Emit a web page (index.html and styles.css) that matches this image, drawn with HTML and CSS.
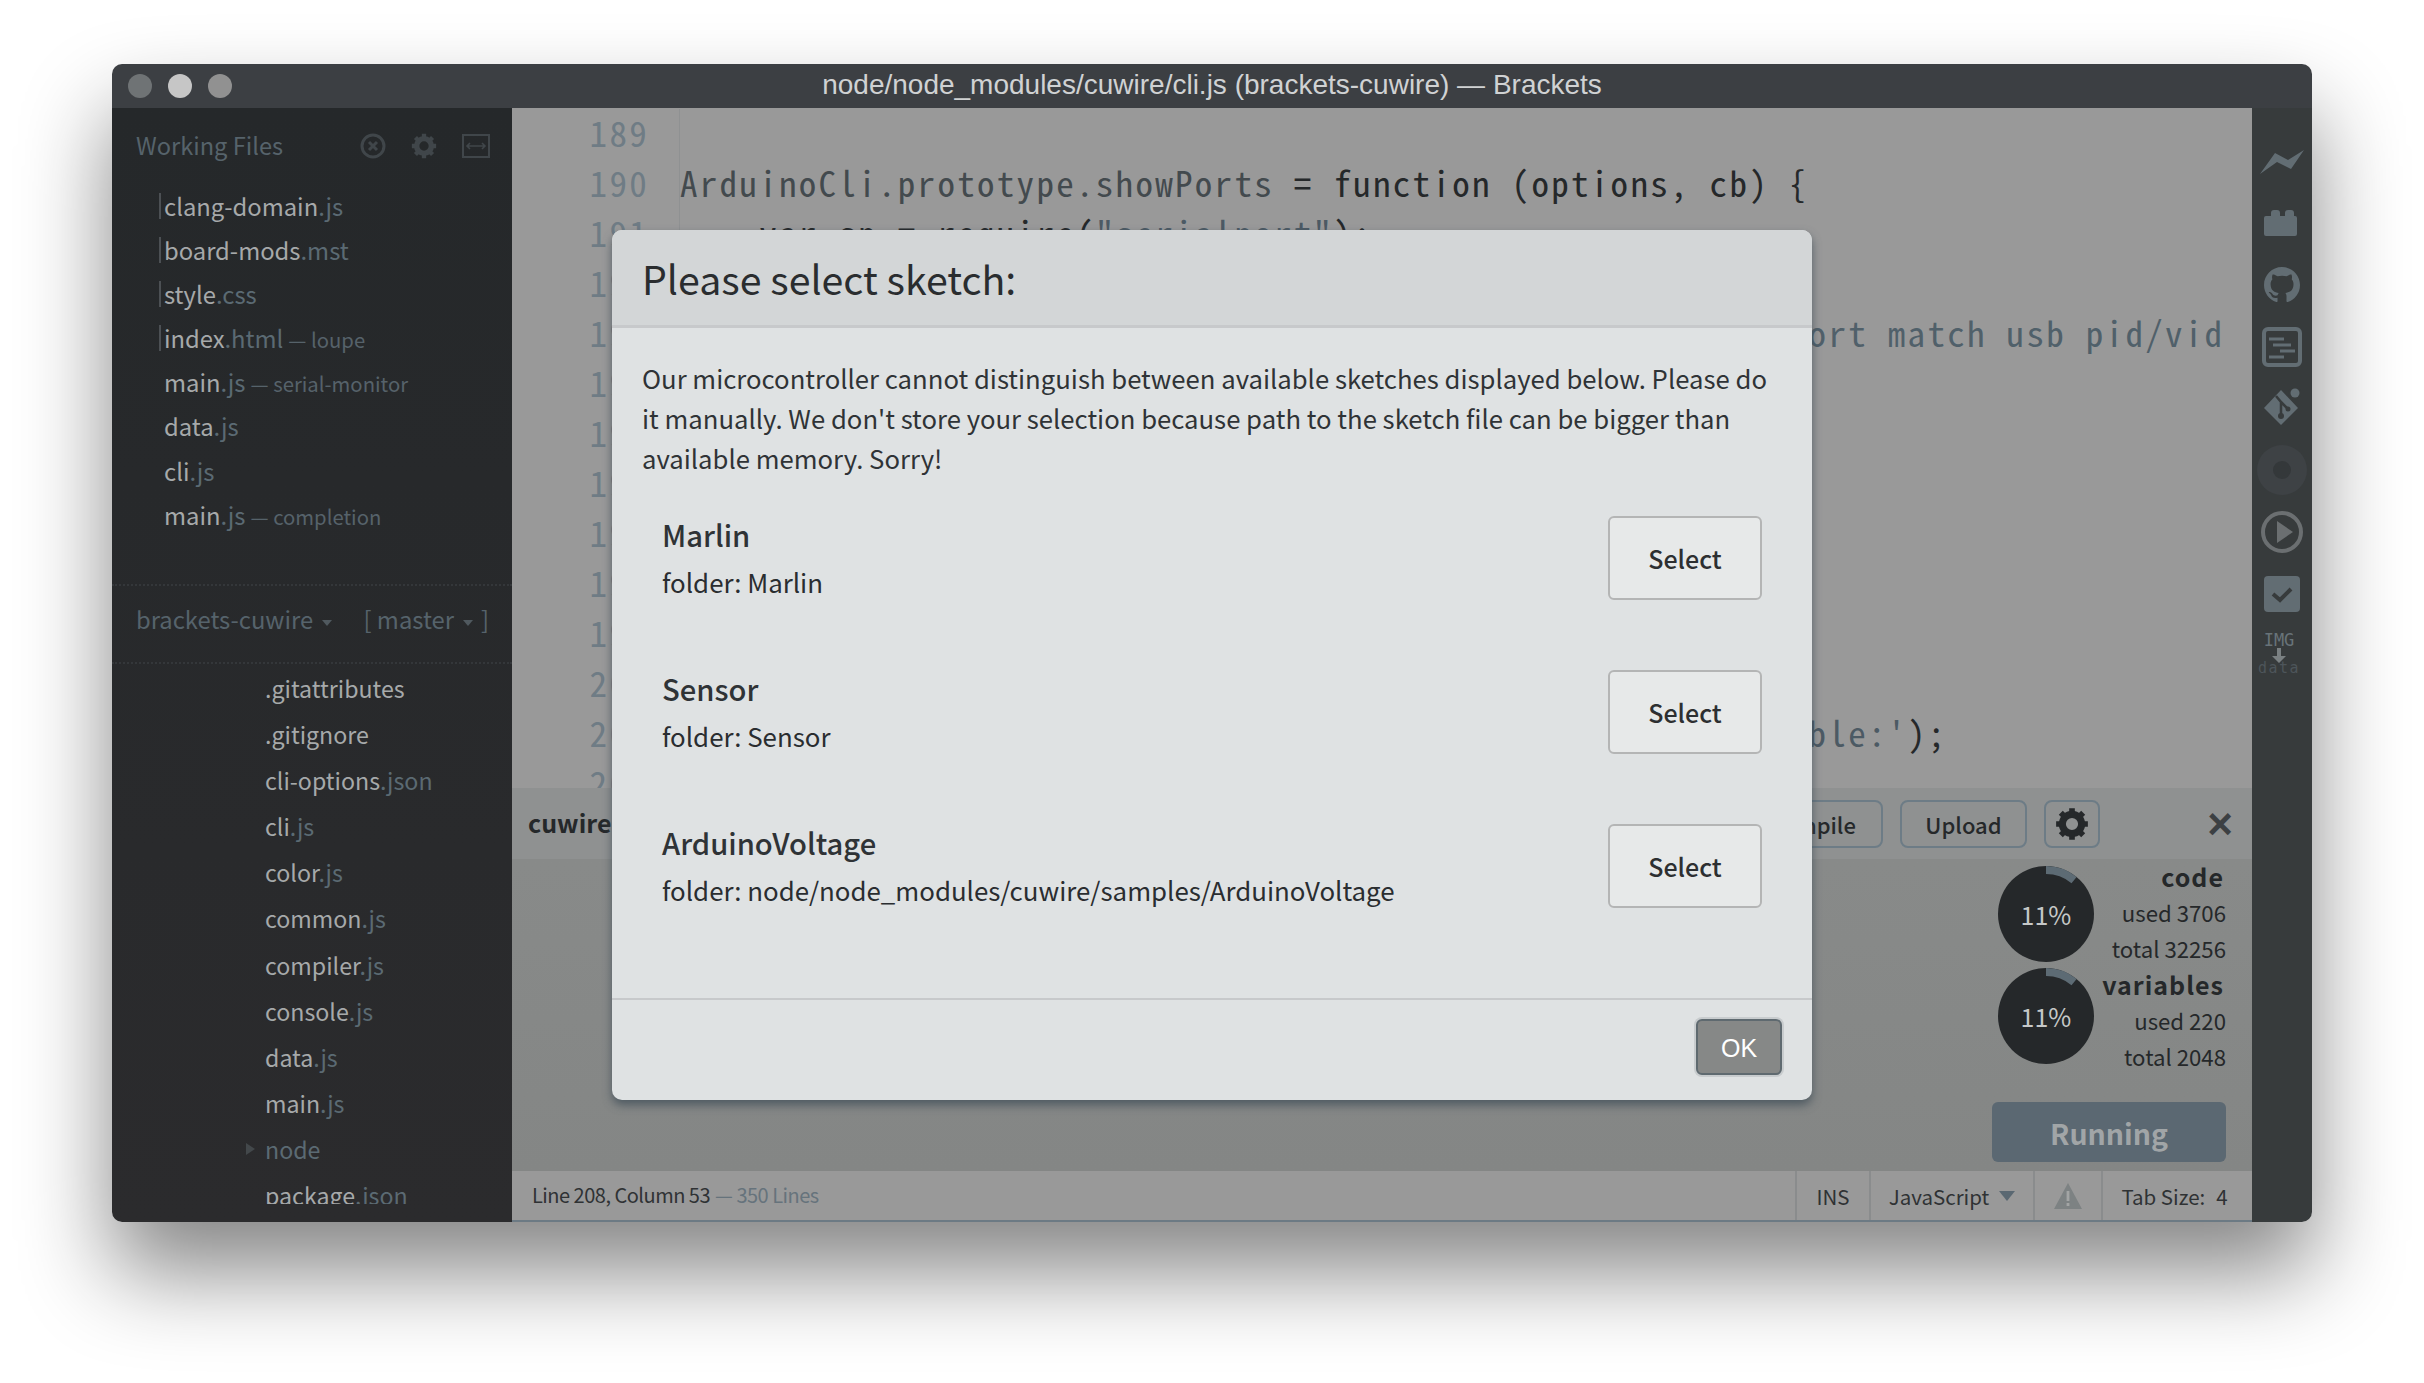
FILE: index.html
```html
<!DOCTYPE html>
<html lang="en">
<head>
<meta charset="utf-8">
<title>Brackets</title>
<link rel="stylesheet" href="styles.css">
</head>
<body>
<svg class="defs" width="0" height="0" aria-hidden="true">
  <symbol id="gear" viewBox="0 0 24 24">
    <circle cx="12" cy="12" r="6.8" fill="none" stroke="currentColor" stroke-width="5"/>
    <path d="M12 .8v5M12 18.2v5M.8 12h5M18.2 12h5M4.1 4.1l3.5 3.5M16.4 16.4l3.5 3.5M4.1 19.9l3.5-3.5M16.4 7.6l3.5-3.5" fill="none" stroke="currentColor" stroke-width="4"/>
  </symbol>
  <symbol id="donut" viewBox="0 0 96 96">
    <circle cx="48" cy="48" r="48" fill="#25282a"/>
    <circle class="donut-arc" cx="48" cy="48" r="44" fill="none" stroke="#5d6b74" stroke-width="8" stroke-dasharray="30.4 246.1" transform="rotate(-90 48 48)"/>
  </symbol>
</svg>
<div class="window">
  <header class="titlebar">
    <div class="lights">
      <span class="light light-a"></span>
      <span class="light light-b"></span>
      <span class="light light-c"></span>
    </div>
    <div class="title">node/node_modules/cuwire/cli.js (brackets-cuwire) — Brackets</div>
  </header>
  <div class="main">
    <aside class="sidebar">
      <div class="working">
        <div class="working-head">
          <span class="working-title">Working Files</span>
          <div class="working-tools">
            <svg class="tool" width="26" height="26" viewBox="0 0 26 26"><circle cx="13" cy="13" r="11" fill="none" stroke="currentColor" stroke-width="3"/><path d="M9 9l8 8M17 9l-8 8" stroke="currentColor" stroke-width="3"/></svg>
            <svg class="tool" width="26" height="26"><use href="#gear"/></svg>
            <svg class="tool" width="28" height="24" viewBox="0 0 28 24"><rect x="1" y="1" width="26" height="22" fill="none" stroke="currentColor" stroke-width="2"/><path d="M5 12h18M8 9l-3 3 3 3M20 9l3 3-3 3" fill="none" stroke="currentColor" stroke-width="1.6"/></svg>
          </div>
        </div>
        <ul class="open-files">
          <li class="open-file marked">clang-domain<span class="ext">.js</span></li>
          <li class="open-file marked">board-mods<span class="ext">.mst</span></li>
          <li class="open-file marked">style<span class="ext">.css</span></li>
          <li class="open-file marked">index<span class="ext">.html</span><span class="note">— loupe</span></li>
          <li class="open-file">main<span class="ext">.js</span><span class="note">— serial-monitor</span></li>
          <li class="open-file">data<span class="ext">.js</span></li>
          <li class="open-file">cli<span class="ext">.js</span></li>
          <li class="open-file">main<span class="ext">.js</span><span class="note">— completion</span></li>
        </ul>
      </div>
      <div class="project-head">
        <span class="project-name">brackets-cuwire<span class="caret"></span></span>
        <span class="project-branch">[ master<span class="caret"></span>]</span>
      </div>
      <ul class="tree">
        <li class="tree-item">.gitattributes</li>
        <li class="tree-item">.gitignore</li>
        <li class="tree-item">cli-options<span class="ext">.json</span></li>
        <li class="tree-item">cli<span class="ext">.js</span></li>
        <li class="tree-item">color<span class="ext">.js</span></li>
        <li class="tree-item">common<span class="ext">.js</span></li>
        <li class="tree-item">compiler<span class="ext">.js</span></li>
        <li class="tree-item">console<span class="ext">.js</span></li>
        <li class="tree-item">data<span class="ext">.js</span></li>
        <li class="tree-item">main<span class="ext">.js</span></li>
        <li class="tree-item folder"><span class="arrow"></span>node</li>
        <li class="tree-item">package<span class="ext">.json</span></li>
      </ul>
    </aside>
    <div class="center">
      <div class="editor">
        <div class="line"><span class="num">189</span><span class="code"></span></div>
        <div class="line"><span class="num">190</span><span class="code"><span class="tk-a">ArduinoCli.prototype.showPorts</span> = function (options, cb) {</span></div>
        <div class="line"><span class="num">191</span><span class="code">    var sp = require(<span class="tk-s">"serialport"</span>);</span></div>
        <div class="line"><span class="num">192</span><span class="code"></span></div>
        <div class="line"><span class="num">193</span><span class="code tk-c">                                                         ort match usb pid/vid</span></div>
        <div class="line"><span class="num">194</span><span class="code"></span></div>
        <div class="line"><span class="num">195</span><span class="code"></span></div>
        <div class="line"><span class="num">196</span><span class="code"></span></div>
        <div class="line"><span class="num">197</span><span class="code"></span></div>
        <div class="line"><span class="num">198</span><span class="code"></span></div>
        <div class="line"><span class="num">199</span><span class="code"></span></div>
        <div class="line"><span class="num">200</span><span class="code"></span></div>
        <div class="line"><span class="num">201</span><span class="code">                                                         <span class="tk-s">ble:'</span>);</span></div>
        <div class="line"><span class="num">202</span><span class="code"></span></div>
      </div>
      <section class="panel">
        <div class="panel-head">
          <span class="panel-name">cuwire</span>
          <div class="panel-actions">
            <button class="pbtn pbtn-compile">Compile</button>
            <button class="pbtn pbtn-upload">Upload</button>
            <button class="pbtn pbtn-gear"><svg width="34" height="34"><use href="#gear"/></svg></button>
            <span class="close">×</span>
          </div>
        </div>
        <div class="panel-body">
          <div class="stats">
            <div class="donuts">
              <div class="donut"><svg width="96" height="96"><use href="#donut"/></svg><span class="donut-label">11%</span></div>
              <div class="donut"><svg width="96" height="96"><use href="#donut"/></svg><span class="donut-label">11%</span></div>
            </div>
            <div class="figures">
              <b class="fig-head">code</b>
              <span>used 3706</span>
              <span>total 32256</span>
              <b class="fig-head">variables</b>
              <span>used 220</span>
              <span>total 2048</span>
            </div>
          </div>
          <button class="running">Running</button>
        </div>
      </section>
      <footer class="status">
        <div class="status-pos">Line 208, Column 53<span class="status-lines">— 350 Lines</span></div>
        <div class="cell cell-ins">INS</div>
        <div class="cell cell-lang">JavaScript<span class="lang-caret"></span></div>
        <div class="cell cell-warn">
          <svg width="30" height="28" viewBox="0 0 30 28"><path d="M15 1L29 27H1Z" fill="#7d8283"/><path d="M13.6 9h2.8v10h-2.8zM13.6 21h2.8v3h-2.8z" fill="#a3a5a5"/></svg>
        </div>
        <div class="cell cell-tab">Tab Size:<span class="tab-num">4</span></div>
      </footer>
    </div>
    <nav class="toolbar">
      <svg class="ic" width="44" height="24" viewBox="0 0 44 24"><path d="M0 24L15 3l13 7L44 0 31 19 17 12Z" fill="currentColor"/></svg>
      <svg class="ic" width="36" height="26" viewBox="0 0 36 26"><path d="M2 6h5V3a3 3 0 013-3h3a3 3 0 013 3v3h5V3a3 3 0 013-3h3a3 3 0 013 3v3h1a2 2 0 012 2v16a2 2 0 01-2 2H2a2 2 0 01-2-2V8a2 2 0 012-2z" fill="currentColor"/></svg>
      <svg class="ic" width="36" height="36" viewBox="0 0 16 16"><path fill="currentColor" d="M8 0C3.58 0 0 3.58 0 8c0 3.54 2.29 6.53 5.47 7.59.4.07.55-.17.55-.38 0-.19-.01-.82-.01-1.49-2.01.37-2.53-.49-2.69-.94-.09-.23-.48-.94-.82-1.13-.28-.15-.68-.52-.01-.53.63-.01 1.08.58 1.23.82.72 1.21 1.87.87 2.33.66.07-.52.28-.87.51-1.07-1.78-.2-3.64-.89-3.64-3.95 0-.87.31-1.59.82-2.15-.08-.2-.36-1.02.08-2.12 0 0 .67-.21 2.2.82.64-.18 1.32-.27 2-.27.68 0 1.36.09 2 .27 1.53-1.04 2.2-.82 2.2-.82.44 1.1.16 1.92.08 2.12.51.56.82 1.27.82 2.15 0 3.07-1.87 3.75-3.65 3.95.29.25.54.73.54 1.48 0 1.07-.01 1.93-.01 2.2 0 .21.15.46.55.38A8.013 8.013 0 0016 8c0-4.42-3.58-8-8-8z"/></svg>
      <svg class="ic" width="40" height="40" viewBox="0 0 40 40"><rect x="2" y="2" width="36" height="36" rx="4" fill="none" stroke="currentColor" stroke-width="4"/><path d="M7 12h15M11 18h18M18 24h15M7 30h15" fill="none" stroke="currentColor" stroke-width="3"/></svg>
      <svg class="ic" width="38" height="38" viewBox="0 0 38 38"><path d="M18 2L1 20l17 17 17-17Z" fill="currentColor"/><circle cx="32" cy="5" r="6.500" fill="#373b3c"/><circle cx="32" cy="5" r="4.500" fill="currentColor"/><path d="M13 8l5 6v14M18 14l7 7" fill="none" stroke="#373b3c" stroke-width="2.500"/><circle cx="18" cy="28" r="3" fill="#373b3c"/><circle cx="25" cy="21" r="2.500" fill="#373b3c"/></svg>
      <svg class="ic ic-disc" width="54" height="50" viewBox="0 0 54 50"><circle cx="27" cy="25" r="25" fill="#3e4245"/><circle cx="27" cy="25" r="9" fill="#34383a"/></svg>
      <svg class="ic ic-play" width="42" height="42" viewBox="0 0 42 42"><circle cx="21" cy="21" r="19" fill="none" stroke="currentColor" stroke-width="4"/><path d="M16 10l16 11-16 11Z" fill="currentColor"/></svg>
      <svg class="ic" width="36" height="36" viewBox="0 0 36 36"><rect width="36" height="36" rx="4" fill="currentColor"/><path d="M9 18l7 6 11-11" fill="none" stroke="#373b3c" stroke-width="4"/></svg>
      <div class="imgdata"><span class="img-a">IMG</span><svg class="img-arrow" width="14" height="15" viewBox="0 0 14 15"><path d="M5 0h4v8h5l-7 7-7-7h5Z" fill="#7a8082"/></svg><span class="img-b">data</span></div>
    </nav>
  </div>
  <div class="modal">
    <div class="modal-head"><h1 class="modal-title">Please select sketch:</h1></div>
    <div class="modal-body">
      <p class="modal-text">Our microcontroller cannot distinguish between available sketches displayed below. Please do it manually. We don't store your selection because path to the sketch file can be bigger than available memory. Sorry!</p>
      <div class="sketch">
        <div class="sketch-info"><div class="sketch-name">Marlin</div><div class="sketch-folder">folder: Marlin</div></div>
        <button class="select">Select</button>
      </div>
      <div class="sketch">
        <div class="sketch-info"><div class="sketch-name">Sensor</div><div class="sketch-folder">folder: Sensor</div></div>
        <button class="select">Select</button>
      </div>
      <div class="sketch">
        <div class="sketch-info"><div class="sketch-name">ArduinoVoltage</div><div class="sketch-folder">folder: node/node_modules/cuwire/samples/ArduinoVoltage</div></div>
        <button class="select">Select</button>
      </div>
    </div>
    <div class="modal-foot"><button class="ok">OK</button></div>
  </div>
</div>
</body>
</html>
```
FILE: styles.css
```css
* { box-sizing: border-box; }
html, body { margin: 0; height: 100%; }
body {
  width: 2424px;
  height: 1383px;
  background: #fff;
  overflow: hidden;
  padding: 64px 0 0 112px;
  font-family: "Noto Sans CJK SC", "Noto Sans", sans-serif;
}
.defs { position: absolute; }
ul { list-style: none; margin: 0; padding: 0; }
button { font-family: inherit; margin: 0; }

.window {
  position: relative;
  width: 2200px;
  height: 1158px;
  border-radius: 10px;
  display: flex;
  flex-direction: column;
  box-shadow: 0 50px 90px rgba(0, 0, 0, .48);
  overflow: hidden;
}
.titlebar {
  height: 44px;
  flex: none;
  background: #3c3f43;
  display: flex;
  align-items: center;
  position: relative;
  padding-left: 16px;
}
.lights { display: flex; gap: 16px; }
.light { width: 24px; height: 24px; border-radius: 50%; }
.light-a { background: #6f7375; }
.light-b { background: #c6c6c6; }
.light-c { background: #919191; }
.title {
  position: absolute;
  inset: 0;
  text-align: center;
  line-height: 42px;
  font-family: "Liberation Sans", sans-serif;
  font-size: 28px;
  color: #d0d2d3;
}
.main { flex: 1; display: flex; min-height: 0; }

/* sidebar */
.sidebar {
  width: 400px;
  flex: none;
  background: linear-gradient(#25282a, #2b2b2d);
  display: flex;
  flex-direction: column;
  padding-bottom: 18px;
}
.working { height: 476px; flex: none; }
.working-head {
  height: 76px;
  padding: 0 22px 3px 24px;
  display: flex;
  align-items: center;
  justify-content: space-between;
}
.working-title { font-size: 23.600px; color: #56636b; }
.working-tools { display: flex; gap: 25px; align-items: center; color: #40464a; margin-top: 3px; }
.tool { display: block; }
.open-file {
  position: relative;
  height: 44.1px;
  line-height: 44.1px;
  padding-left: 52px;
  font-size: 23.800px;
  color: #a6a9aa;
  white-space: nowrap;
}
.open-file.marked::before {
  content: "";
  position: absolute;
  left: 47px;
  top: 9px;
  width: 2px;
  height: 26px;
  background: #4c5054;
}
.ext { color: #5b6a73; }
.note { font-size: 20.300px; color: #56626a; margin-left: 5px; }
.project-head {
  height: 80px;
  flex: none;
  border-top: 2px dotted #34373a;
  border-bottom: 2px dotted #34373a;
  padding: 0 23px 11px 24px;
  display: flex;
  align-items: center;
  justify-content: space-between;
  font-size: 23.800px;
  color: #56636b;
}
.caret {
  display: inline-block;
  margin: 0 8px 0 9px;
  border: 5px solid transparent;
  border-top: 6px solid #50595f;
  border-bottom: 0;
  vertical-align: 3px;
}
.tree { flex: 1; overflow: hidden; padding-top: 1px; }
.tree-item {
  position: relative;
  height: 46.1px;
  line-height: 46.1px;
  padding-left: 153px;
  font-size: 23.200px;
  color: #a6a9aa;
}
.folder { color: #5b6a73; }
.arrow {
  position: absolute;
  left: 134px;
  top: 17px;
  border: 6px solid transparent;
  border-left: 9px solid #43484b;
  border-right: 0;
}

/* center column */
.center { flex: 1; min-width: 0; display: flex; flex-direction: column; }
.editor {
  flex: 1;
  min-height: 0;
  overflow: hidden;
  background: #999;
  padding-top: 1px;
  font-family: "Noto Sans Mono CJK SC", "DejaVu Sans Mono", monospace;
  font-size: 35px;
  letter-spacing: 2.3px;
  color: #25282a;
}
.line { height: 50px; line-height: 46px; display: flex; white-space: pre; }
.num {
  width: 168px;
  flex: none;
  padding-right: 30px;
  text-align: right;
  color: #6f7c85;
  border-right: 1px solid #8f9192;
}
.code { flex: 1; }
.tk-a { color: #434a4e; }
.tk-s { color: #4c5a64; }
.tk-c { color: #50606a; }

.panel {
  height: 383px;
  flex: none;
  display: flex;
  flex-direction: column;
  background: linear-gradient(#898b8a, #848685);
}
.panel-head {
  height: 71px;
  flex: none;
  background: #8f9191;
  padding: 0 16px 0 16px;
  display: flex;
  align-items: center;
  justify-content: space-between;
}
.panel-name { font-size: 25px; font-weight: 700; color: #25282a; margin-bottom: 4px; }
.panel-actions { display: flex; align-items: center; gap: 17px; }
.pbtn {
  height: 48px;
  border: 2px solid #6d7c86;
  border-radius: 8px;
  background: transparent;
  color: #25282a;
  font-size: 22px;
  font-weight: 500;
  padding: 0;
  display: flex;
  align-items: center;
  justify-content: center;
}
.pbtn-compile { width: 142px; }
.pbtn-upload { width: 127px; }
.pbtn-gear { width: 56px; color: #25282a; }
.close {
  width: 119px;
  text-align: right;
  padding-right: 3px;
  font-family: "Liberation Sans", sans-serif;
  font-size: 44px;
  font-weight: 700;
  line-height: 44px;
  color: #3c4043;
}
.panel-body {
  flex: 1;
  padding: 1px 26px 9px 0;
  display: flex;
  flex-direction: column;
  align-items: flex-end;
  justify-content: space-between;
}
.stats { display: flex; gap: 0; }
.donuts { display: flex; flex-direction: column; gap: 6px; padding-top: 6px; }
.donut { position: relative; width: 96px; height: 96px; }
.donut svg { display: block; }
.donut-label {
  position: absolute;
  inset: 0;
  text-align: center;
  line-height: 96px;
  font-size: 25px;
  color: #c6c8c8;
}
.figures {
  width: 132px;
  margin-top: -2px;
  display: flex;
  flex-direction: column;
  align-items: flex-end;
  font-size: 22.200px;
  line-height: 36px;
  color: #25282a;
  white-space: nowrap;
}
.fig-head { font-size: 25px; letter-spacing: 1px; padding-right: 2px; }
.running {
  width: 234px;
  height: 60px;
  border: 0;
  border-radius: 6px;
  background: #5b6872;
  color: #a1a5a7;
  font-size: 28.500px;
  font-weight: 700;
}

.status {
  height: 51px;
  flex: none;
  background: #999;
  border-bottom: 2px solid #6c7a84;
  display: flex;
  font-size: 20.500px;
  color: #2f3234;
}
.status-pos { flex: 1; padding-left: 20px; line-height: 48px; font-size: 20px; letter-spacing: -.5px; }
.status-lines { color: #66737c; margin-left: 5px; }
.cell {
  flex: none;
  border-left: 2px solid #8a8c8d;
  display: flex;
  align-items: center;
  justify-content: center;
}
.cell-ins { width: 74px; }
.cell-lang { width: 164px; gap: 10px; }
.cell-warn { width: 68px; }
.cell-tab { width: 151px; padding-right: 6px; }
.lang-caret {
  border: 8px solid transparent;
  border-top: 10px solid #5a6872;
  border-bottom: 0;
}
.tab-num { margin-left: 11px; }

/* right toolbar */
.toolbar {
  width: 60px;
  flex: none;
  background: #373b3c;
  color: #626d73;
  display: flex;
  flex-direction: column;
  align-items: center;
}
.ic { flex: none; display: block; }
.toolbar .ic:nth-child(1) { margin-top: 42px; }
.toolbar .ic:nth-child(2) { margin-top: 36px; }
.toolbar .ic:nth-child(3) { margin-top: 31px; }
.toolbar .ic:nth-child(4) { margin-top: 24px; }
.toolbar .ic:nth-child(5) { margin-top: 21px; }
.toolbar .ic:nth-child(6) { margin-top: 19px; }
.toolbar .ic:nth-child(7) { margin-top: 16px; }
.toolbar .ic:nth-child(8) { margin-top: 23px; }
.ic-play { color: #6b6f71; }
.imgdata {
  margin-top: 20px;
  margin-right: 6px;
  display: flex;
  flex-direction: column;
  align-items: center;
  font-family: "DejaVu Sans Mono", monospace;
  line-height: 16px;
}
.img-a { color: #687379; font-size: 17px; }
.img-b { color: #4d555a; font-size: 15px; margin-top: -3px; letter-spacing: 1.500px; }
.img-arrow { display: block; }

/* modal */
.modal {
  position: absolute;
  left: 500px;
  top: 166px;
  width: 1200px;
  height: 870px;
  border-radius: 10px;
  background: #dfe2e3;
  box-shadow: 0 5px 10px rgba(60, 75, 85, .75);
  display: flex;
  flex-direction: column;
  overflow: hidden;
}
.modal-head {
  height: 98px;
  flex: none;
  background: #d3d6d7;
  border-bottom: 3px solid #c7c9cb;
  padding-left: 30px;
}
.modal-title {
  margin: 0;
  font-size: 39.300px;
  font-weight: 400;
  line-height: 95px;
  color: #2a2d2f;
}
.modal-body { flex: 1; padding: 30px 32px 0 30px; }
.modal-text {
  margin: 0 0 38px;
  font-size: 25.700px;
  line-height: 40px;
  color: #2f3336;
}
.sketch {
  height: 84px;
  margin-bottom: 70px;
  padding: 0 18px 0 20px;
  display: flex;
  align-items: center;
  justify-content: space-between;
}
.sketch-name { font-size: 29.200px; font-weight: 500; line-height: 48px; color: #2f3336; }
.sketch-folder { font-size: 25.850px; line-height: 48px; color: #2a2d30; }
.select {
  width: 154px;
  height: 84px;
  border: 2px solid #b4b5b5;
  border-radius: 6px;
  background: #e7e9e9;
  font-size: 25px;
  font-weight: 500;
  color: #2d2f31;
}
.modal-foot {
  height: 102px;
  flex: none;
  border-top: 2px solid #c7c9cb;
  padding: 19px 30px 0 0;
  display: flex;
  justify-content: flex-end;
  align-items: flex-start;
}
.ok {
  width: 86px;
  height: 56px;
  padding: 2px 0 0;
  border: 2px solid #5f6a70;
  border-radius: 6px;
  background: #868887;
  box-shadow: 0 0 0 2px #c8ccce;
  font-family: "Liberation Sans", sans-serif;
  font-size: 25px;
  color: #fff;
}
```
